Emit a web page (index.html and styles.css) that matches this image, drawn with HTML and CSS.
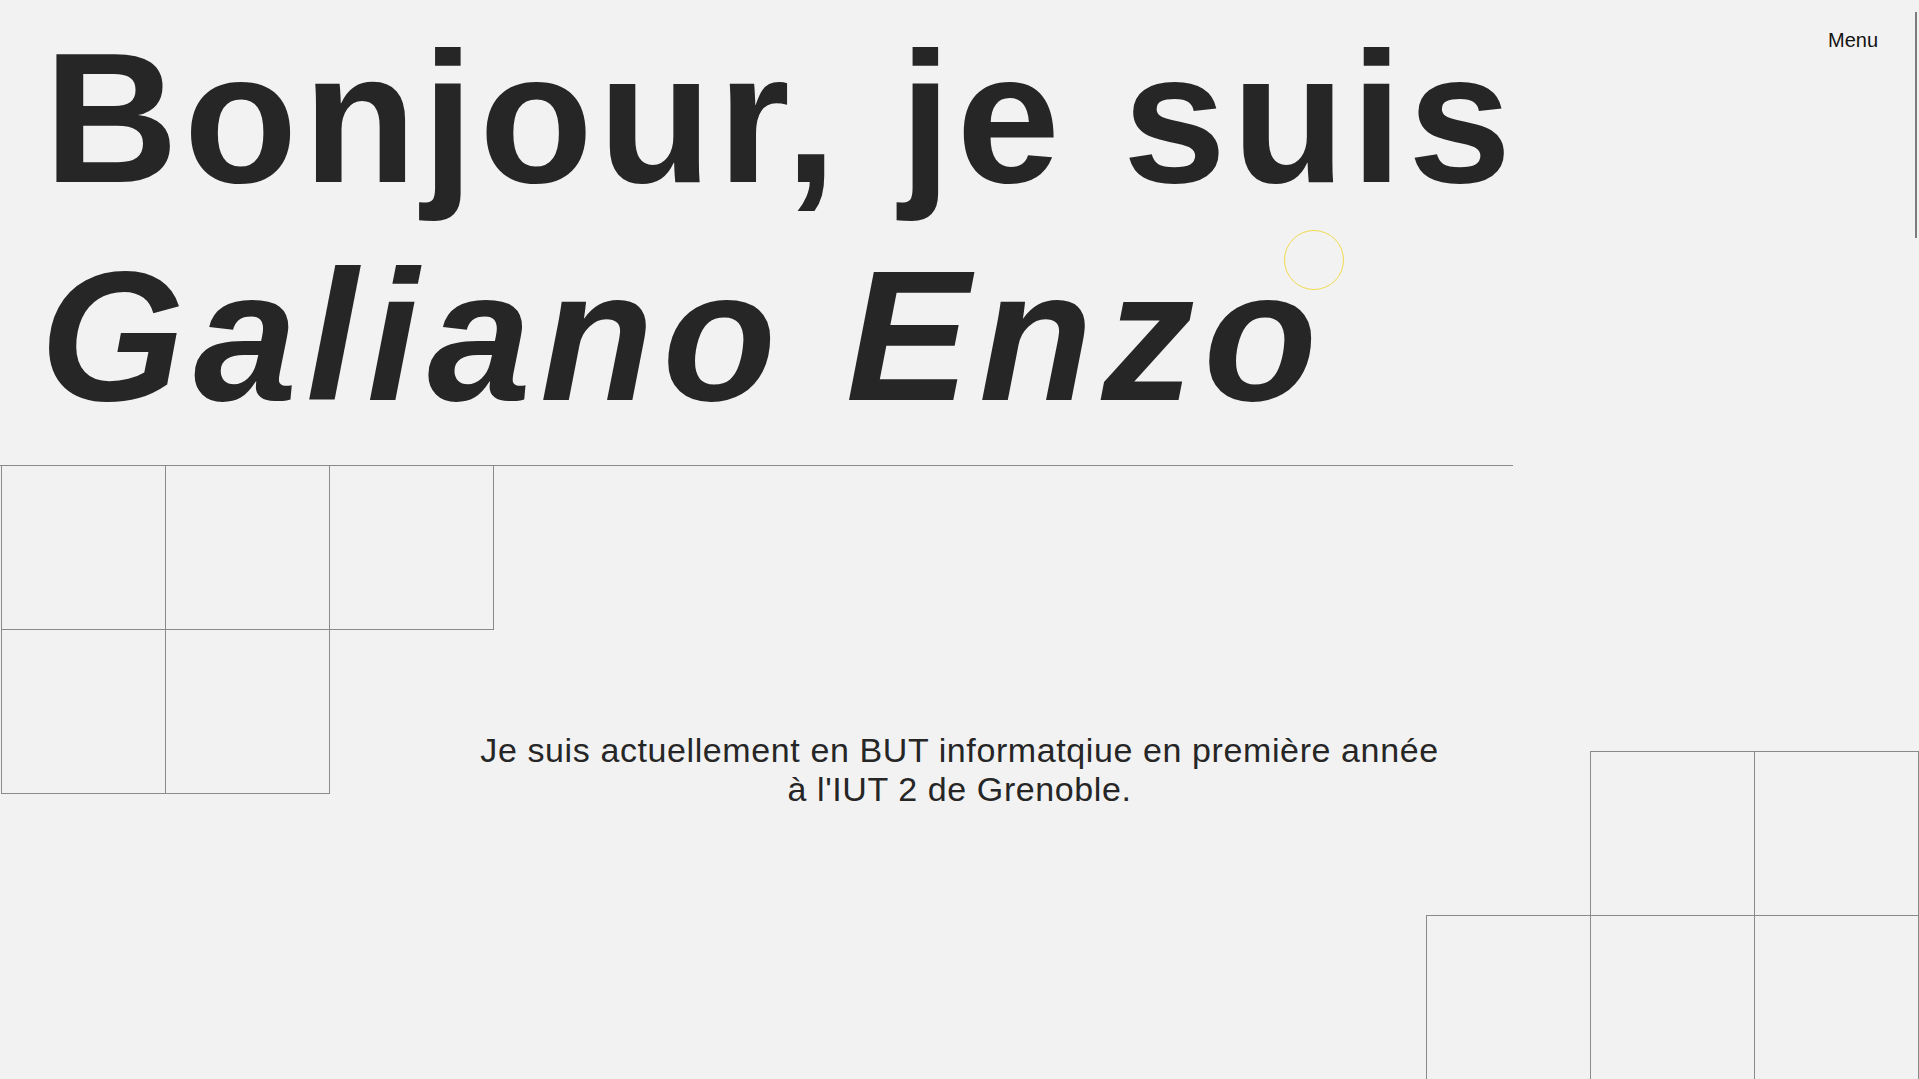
FILE: index.html
```html
<!DOCTYPE html>
<html lang="fr">
<head>
<meta charset="utf-8">
<title>Galiano Enzo</title>
<link rel="stylesheet" href="styles.css">
</head>
<body>
<div class="page">
  <div class="top">
    <header class="hero">
      <h1 class="title">
        <span class="line line-1">Bonjour, je suis</span>
        <span class="line line-2">Galiano Enzo</span>
      </h1>
    </header>
    <nav class="nav"><a class="menu" href="#">Menu</a></nav>
  </div>
  <section class="stage">
    <div class="tiles tiles-left">
      <div class="tile"></div>
      <div class="tile"></div>
      <div class="tile"></div>
      <div class="tile"></div>
      <div class="tile"></div>
    </div>
    <p class="intro">Je suis actuellement en BUT informatqiue en première année<br>à l'IUT 2 de Grenoble.</p>
    <div class="tiles tiles-right">
      <div class="tile tile-skip"></div>
      <div class="tile"></div>
      <div class="tile"></div>
      <div class="tile"></div>
      <div class="tile"></div>
    </div>
  </section>
</div>
<div class="cursor"></div>
<div class="scroll-thumb"></div>
</body>
</html>
```
FILE: styles.css
```css
html, body {
  margin: 0;
  padding: 0;
  overflow: hidden;
  background: #f2f2f2;
}

body {
  font-family: "Liberation Sans", Arial, sans-serif;
  color: #262626;
  width: 1919px;
  height: 1079px;
}

.page {
  display: flex;
  flex-direction: column;
}

.top {
  display: flex;
  align-items: flex-start;
}

.hero {
  width: 1513px;
  flex: none;
  box-sizing: border-box;
  border-bottom: 1px solid #8a8a8a;
  padding: 9px 0 20px 44px;
}

.title {
  margin: 0;
  font-size: 186px;
  line-height: 218px;
  font-weight: 700;
  color: #262626;
}

.line {
  display: block;
  white-space: nowrap;
}

.line-1 {
  letter-spacing: 5.5px;
}

.line-2 {
  font-style: italic;
  letter-spacing: 9px;
  margin-left: -4px;
}

.nav {
  flex: 1;
  text-align: right;
  padding: 29px 41px 0 0;
}

.menu {
  font-size: 20px;
  color: #141414;
  text-decoration: none;
}

.stage {
  display: grid;
  grid-template-columns: 493px 1fr 493px;
  margin-top: -1px;
}

.tiles {
  display: grid;
  grid-template-columns: repeat(3, 164px);
  grid-auto-rows: 164px;
  align-self: start;
  grid-row: 1;
}

.tiles-left {
  grid-column: 1;
  margin-left: 1px;
}

.tiles-right {
  grid-column: 3;
  justify-self: end;
  margin-right: 1px;
  margin-top: 286px;
}

.tile {
  width: 165px;
  height: 165px;
  box-sizing: border-box;
  border: 1px solid #8a8a8a;
}

.tile-skip {
  grid-column-start: 2;
}

.intro {
  grid-column: 1 / -1;
  grid-row: 1;
  align-self: start;
  margin: 266px 0 0;
  text-align: center;
  font-size: 34px;
  line-height: 39px;
  letter-spacing: 0.6px;
  color: #262626;
}

.cursor {
  position: fixed;
  left: 1284px;
  top: 230px;
  width: 60px;
  height: 60px;
  box-sizing: border-box;
  border: 1px solid #f2d94e;
  border-radius: 50%;
  pointer-events: none;
}

.scroll-thumb {
  position: fixed;
  right: 2px;
  top: 12px;
  width: 2px;
  height: 226px;
  background: #7c7c7c;
}
```
